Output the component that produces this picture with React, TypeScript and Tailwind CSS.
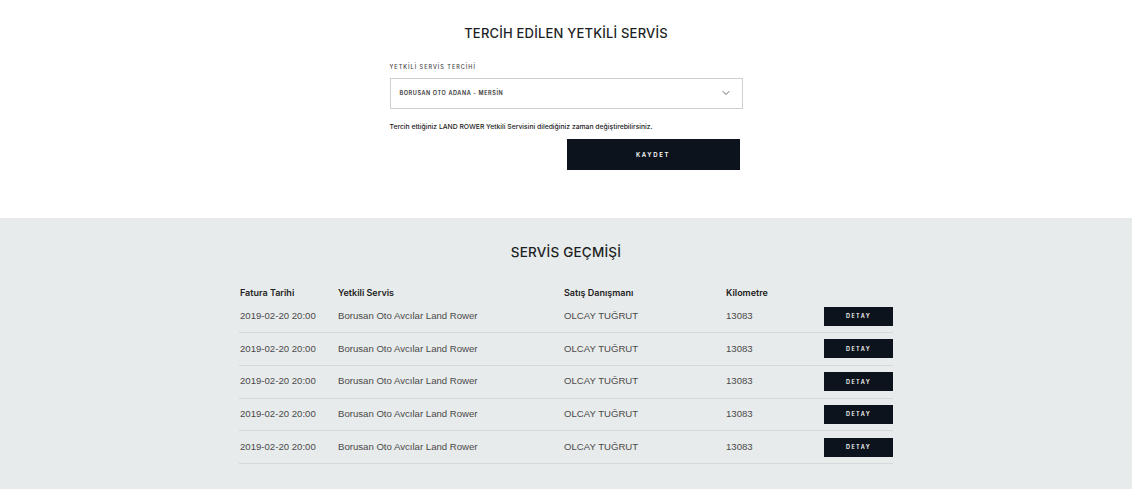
import { ChevronDown } from "lucide-react";

const rows = Array.from({ length: 5 }, () => ({
  date: "2019-02-20 20:00",
  service: "Borusan Oto Avcılar Land Rower",
  advisor: "OLCAY TUĞRUT",
  km: "13083",
}));

const head = "font-['Inter',sans-serif]";
const body = "font-['Liberation_Sans',Arial,sans-serif]";

export default function App() {
  return (
    <div className="min-h-[493px] bg-white">
      {/* tercih edilen servis */}
      <section className="flex h-[218px] flex-col items-center pt-[24px]">
        <h2 className={`${head} text-[13px] font-medium tracking-[0.2px] text-[#1c1f24]`}>
          TERCİH EDİLEN YETKİLİ SERVİS
        </h2>
        <div className="mt-[19px] w-[353px]">
          <label className={`${head} block text-[5.5px] font-medium tracking-[1px] text-[#444]`}>
            YETKİLİ SERVİS TERCİHİ
          </label>
          <div className="mt-[7px] flex h-[31px] items-center justify-between border border-[#cfcfcf] bg-white pl-[9px] pr-[10px]">
            <span className={`${head} text-[5.5px] font-semibold tracking-[0.6px] text-[#333]`}>
              BORUSAN OTO ADANA - MERSİN
            </span>
            <ChevronDown className="h-[12px] w-[12px] text-[#555]" strokeWidth={1.8} />
          </div>
          <p className={`${head} mt-[13px] text-[6.8px] font-medium text-[#222]`}>
            Tercih ettiğiniz LAND ROWER Yetkili Servisini dilediğiniz zaman değiştirebilirsiniz.
          </p>
          <div className="mt-[7px] flex justify-end pr-[3px]">
            <button
              type="button"
              className={`${head} h-[31px] w-[173px] bg-[#0d131c] text-[6px] font-semibold tracking-[1.6px] text-white`}
            >
              KAYDET
            </button>
          </div>
        </div>
      </section>

      {/* servis gecmisi */}
      <section className="flex h-[271px] flex-col items-center bg-[#e8ebeb] pt-[24px]">
        <h2 className={`${head} text-[13.5px] font-medium tracking-[0.2px] text-[#1c1f24]`}>
          SERVİS GEÇMİŞİ
        </h2>
        <div className="mt-[23px] w-[654px]">
          <div
            className={`${head} grid h-[15px] grid-cols-[98px_226px_162px_98px_70px] items-center pl-[1px] text-[9px] font-semibold text-[#222]`}
          >
            <span>Fatura Tarihi</span>
            <span>Yetkili Servis</span>
            <span>Satış Danışmanı</span>
            <span>Kilometre</span>
            <span />
          </div>
          {rows.map((r, i) => (
            <div
              key={i}
              className={`${body} grid h-[32.75px] grid-cols-[98px_226px_162px_98px_70px] items-center border-b border-[#d5d8d8] pl-[1px] text-[9.6px] text-[#4a4a4a]`}
            >
              <span>{r.date}</span>
              <span>{r.service}</span>
              <span>{r.advisor}</span>
              <span>{r.km}</span>
              <button
                type="button"
                className={`${head} h-[19px] w-[69px] bg-[#0d131c] text-[5.5px] font-semibold tracking-[1.4px] text-white`}
              >
                DETAY
              </button>
            </div>
          ))}
        </div>
      </section>
    </div>
  );
}
